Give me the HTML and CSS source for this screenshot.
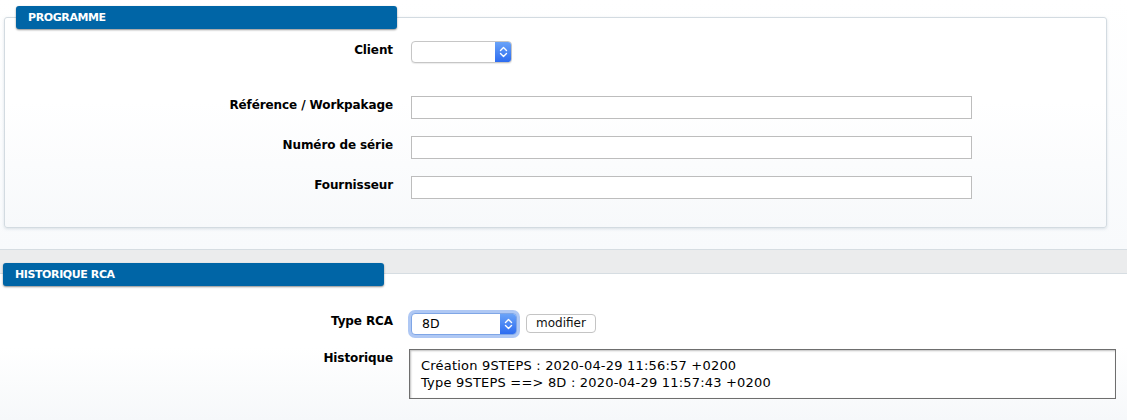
FILE: index.html
```html
<!DOCTYPE html>
<html lang="fr">
<head>
<meta charset="utf-8">
<title>RCA</title>
<link rel="stylesheet" href="styles.css">
</head>
<body>
<div class="top">
  <div class="panel">
    <div class="tab">PROGRAMME</div>
    <div class="form">
      <div class="label">Client</div>
      <div class="field">
        <div class="select client">
          <span class="value"></span>
          <span class="cap"><svg width="9" height="12" viewBox="0 0 9 12"><path d="M1.5 4.5 L4.5 1.5 L7.5 4.5 M1.5 7.5 L4.5 10.5 L7.5 7.5" fill="none" stroke="#fff" stroke-width="1.4" stroke-linecap="round" stroke-linejoin="round"/></svg></span>
        </div>
      </div>
      <div class="label gap-top">Référence / Workpakage</div>
      <div class="field gap-top"><div class="input"></div></div>
      <div class="label">Numéro de série</div>
      <div class="field"><div class="input"></div></div>
      <div class="label">Fournisseur</div>
      <div class="field"><div class="input"></div></div>
    </div>
  </div>
</div>
<div class="band">
  <div class="tab tab2">HISTORIQUE RCA</div>
</div>
<div class="section">
  <div class="form form2">
    <div class="label">Type RCA</div>
    <div class="field row">
      <div class="select type focus">
        <span class="value">8D</span>
        <span class="cap"><svg width="9" height="12" viewBox="0 0 9 12"><path d="M1.5 4.5 L4.5 1.5 L7.5 4.5 M1.5 7.5 L4.5 10.5 L7.5 7.5" fill="none" stroke="#fff" stroke-width="1.4" stroke-linecap="round" stroke-linejoin="round"/></svg></span>
      </div>
      <button class="btn" type="button">modifier</button>
    </div>
    <div class="label">Historique</div>
    <div class="field">
      <div class="history">
        <div>Création 9STEPS : 2020-04-29 11:56:57 +0200</div>
        <div>Type 9STEPS ==&gt; 8D : 2020-04-29 11:57:43 +0200</div>
      </div>
    </div>
  </div>
</div>
</body>
</html>
```
FILE: styles.css
```css
* { box-sizing: border-box; }
html, body { margin: 0; padding: 0; }
body {
  width: 1127px;
  height: 420px;
  overflow: hidden;
  font-family: "DejaVu Sans", Verdana, sans-serif;
  font-size: 12px;
  color: #000;
  background: #fff;
}
.top {
  padding: 17px 20px 20px 4px;
  background: linear-gradient(#ffffff, #f8fafc);
  height: 249px;
}
.panel {
  height: 211px;
  border: 1px solid #d3dbe1;
  border-radius: 3px;
  background: linear-gradient(#ffffff 0%, #ffffff 40%, #f7f9fb 100%);
  box-shadow: 0 1px 3px rgba(160,175,190,0.35);
}
.tab {
  width: 381px;
  height: 23px;
  margin: -12px 0 0 11px;
  padding: 0 12px;
  background: #0065a6;
  border-radius: 3px;
  box-shadow: 0 1px 2px rgba(0,0,0,0.45);
  color: #fff;
  font-family: "DejaVu Sans", sans-serif;
  font-size: 11px;
  font-weight: bold;
  line-height: 23px;
  letter-spacing: -0.4px;
}
.band {
  height: 25px;
  background: #ebeced;
  border-top: 1px solid #d6dde2;
  border-bottom: 1px solid #d6dde2;
}
.tab2 {
  margin: 13px 0 0 3px;
  position: relative;
}
.section {
  height: 146px;
  background: linear-gradient(#ffffff 0%, #ffffff 50%, #f6f8fa 100%);
  padding-top: 38px;
}
.form {
  display: grid;
  grid-template-columns: 388px 1fr;
  column-gap: 18px;
  row-gap: 17px;
  padding-top: 12px;
  align-items: start;
}
.form2 {
  grid-template-columns: 393px 1fr;
  column-gap: 18px;
  row-gap: 14px;
  padding-top: 0;
}
.label {
  text-align: right;
  font-weight: bold;
  font-size: 12px;
  line-height: 16px;
  padding-top: 1px;
  letter-spacing: -0.1px;
}
.gap-top { margin-top: 16px; }
.field { display: flex; }
.row { align-items: center; gap: 9px; }
.input {
  width: 561px;
  height: 23px;
  border: 1px solid #bdbdbd;
  background: #fff;
}
.select {
  display: flex;
  height: 22px;
  border: 1px solid #c6c6c6;
  border-radius: 4px;
  background: #fff;
  overflow: hidden;
  box-shadow: 0 1px 1px rgba(0,0,0,0.08);
}
.select .value {
  flex: 1;
  padding-left: 10px;
  line-height: 20px;
  font-size: 12.5px;
}
.select .cap {
  width: 16px;
  display: flex;
  align-items: center;
  justify-content: center;
  background: linear-gradient(#6aa3f8, #2d6cf0);
}
.client { width: 101px; }
.type { width: 106px; margin-top: 1px; }
.focus {
  border-color: #7fa6e6;
  box-shadow: 0 0 0 3px rgba(110,155,235,0.55);
}
.btn {
  width: 70px;
  height: 19px;
  padding: 0;
  border: 1px solid #c4c4c4;
  border-radius: 4px;
  background: #fff;
  font-family: "DejaVu Sans", sans-serif;
  font-size: 12px;
  color: #111;
  line-height: 17px;
}
.history {
  width: 707px;
  height: 50px;
  margin-left: -2px;
  border: 1px solid #6e6e6e;
  box-shadow: inset 1px 1px 2px rgba(0,0,0,0.25);
  background: #fff;
  padding: 7px 11px;
  font-size: 13px;
  line-height: 17px;
  letter-spacing: 0.2px;
}
```
